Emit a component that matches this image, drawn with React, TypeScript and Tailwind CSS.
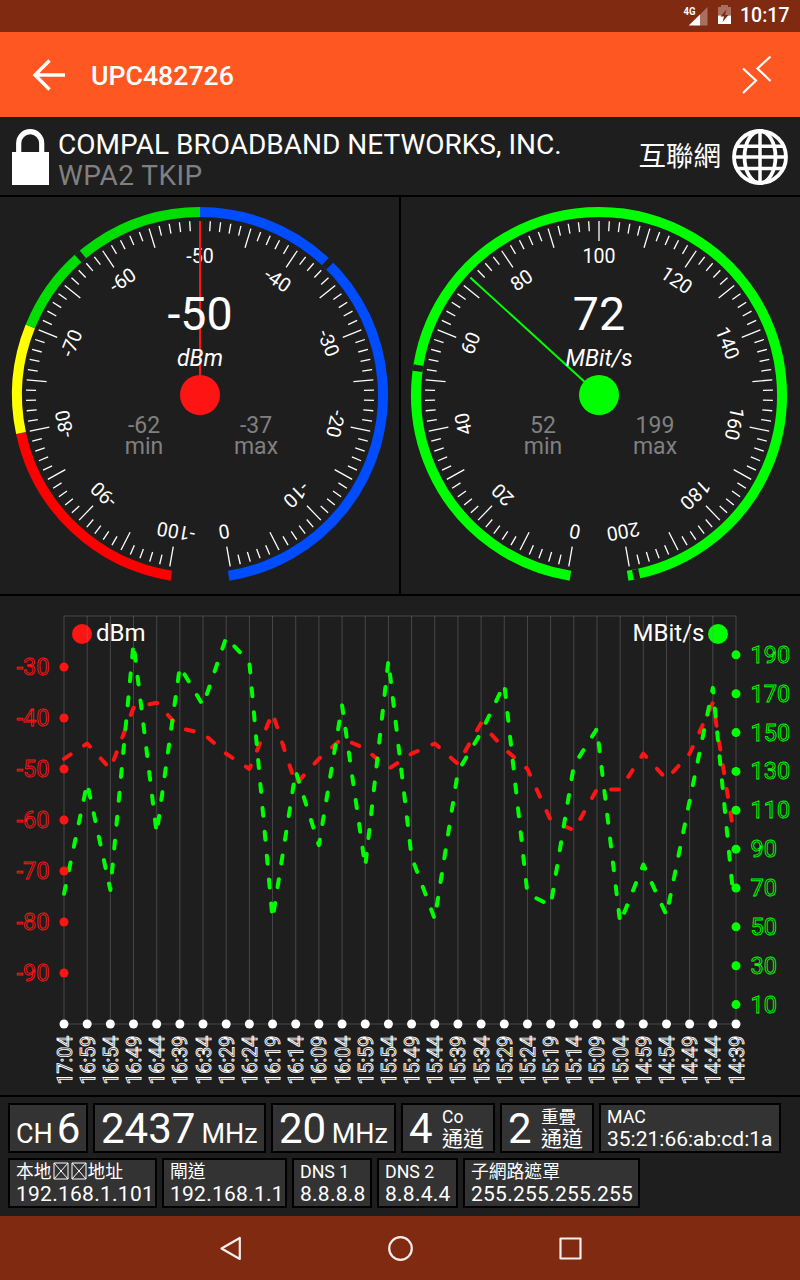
import type { ReactNode } from 'react'

const FONT = "font-['Roboto','Noto_Sans_CJK_TC',sans-serif]"

const TIMES = [
  '17:04', '16:59', '16:54', '16:49', '16:44', '16:39', '16:34', '16:29', '16:24', '16:19',
  '16:14', '16:09', '16:04', '15:59', '15:54', '15:49', '15:44', '15:39', '15:34', '15:29',
  '15:24', '15:19', '15:14', '15:09', '15:04', '14:59', '14:54', '14:49', '14:44', '14:39'
]

const SIGNAL = [
  -48, -45, -50, -38, -37, -42, -43, -47, -50, -39, -53, -48, -44, -46, -50,
  -47, -45, -49, -41, -46, -50, -60, -62, -54, -54, -47, -52, -47, -37, -62
]

const SPEED = [
  67, 124, 69, 196, 98, 184, 164, 199, 186, 54, 130, 92, 164, 81, 187,
  86, 54, 130, 150, 175, 67, 61, 133, 152, 52, 82, 56, 115, 173, 66
]

interface Zone {
  from: number
  to: number
  color: string
}

interface GaugeProps {
  cx: number
  min: number
  max: number
  value: number
  low: number
  high: number
  unit: string
  color: string
  zones: Zone[]
}

// Degrees clockwise from the top
function polar(cx: number, cy: number, r: number, deg: number) {
  const a = (deg * Math.PI) / 180
  return { x: cx + r * Math.sin(a), y: cy - r * Math.cos(a) }
}

function arcPath(cx: number, cy: number, r: number, from: number, to: number) {
  const p = polar(cx, cy, r, from)
  const q = polar(cx, cy, r, to)
  const large = to - from > 180 ? 1 : 0
  return `M${p.x} ${p.y}A${r} ${r} 0 ${large} 1 ${q.x} ${q.y}`
}

function Gauge({ cx, min, max, value, low, high, unit, color, zones }: GaugeProps) {
  const cy = 198
  const angle = (v: number) => ((v - min) / (max - min)) * 340 - 170
  const tip = polar(cx, cy, 174, angle(value))

  return (
    <svg width="399" height="397" viewBox="0 0 399 397" className="block">
      {zones.map((z) => (
        <path
          key={z.from}
          d={arcPath(cx, cy, 183, z.from === min ? -171 : angle(z.from), z.to === max ? 171 : angle(z.to))}
          fill="none"
          stroke={z.color}
          strokeWidth="10"
        />
      ))}
      {[low, high].map((v) => (
        <path key={v} d={arcPath(cx, cy, 183, angle(v) - 1, angle(v) + 1)} fill="none" stroke="#1e1e1e" strokeWidth="10" />
      ))}
      {Array.from({ length: 101 }, (_, i) => (
        <line
          key={i}
          x1={cx}
          x2={cx}
          y1={cy - 174}
          y2={cy - (i % 5 === 0 ? 154 : 164)}
          stroke="#fff"
          strokeWidth="1.3"
          transform={`rotate(${i * 3.4 - 170} ${cx} ${cy})`}
        />
      ))}
      {Array.from({ length: 11 }, (_, i) => (
        <text
          key={i}
          x={cx}
          y={cy - 131.8}
          textAnchor="middle"
          fontSize="19.6"
          fill="#fff"
          transform={`rotate(${i * 34 - 170} ${cx} ${cy})`}
        >
          {min + ((max - min) / 10) * i}
        </text>
      ))}
      <line x1={cx} y1={cy} x2={tip.x} y2={tip.y} stroke={color} strokeWidth="2" />
      <circle cx={cx} cy={cy} r="20" fill={color} />
      <text x={cx} y={cy - 65.5} textAnchor="middle" fontSize="46.5" fill="#fff">{value}</text>
      <text x={cx} y={cy - 29} textAnchor="middle" fontSize="23" fontStyle="italic" fill="#fff">{unit}</text>
      <g fontSize="23" fill="#808080" textAnchor="middle">
        <text x={cx - 56} y={cy + 38}>{low}</text>
        <text x={cx - 56} y={cy + 59}>min</text>
        <text x={cx + 56} y={cy + 38}>{high}</text>
        <text x={cx + 56} y={cy + 59}>max</text>
      </g>
    </svg>
  )
}

function HistoryChart() {
  const left = 64
  const top = 20
  const bottom = 428
  const step = 672 / 29
  const lastX = 733.3
  const signalY = (v: number) => top + (-20 - v) * 5.1
  const speedY = (v: number) => top + ((210 - v) * 408) / 210
  const toPoints = (data: number[], y: (v: number) => number) =>
    data.map((v, i) => `${i === 29 ? lastX : left + i * step},${y(v)}`).join(' ')

  return (
    <svg width="800" height="499" viewBox="0 0 800 499" className="block">
      <circle cx="82" cy="38" r="10" fill="#ff1414" />
      <circle cx="718" cy="38" r="10" fill="#00ff00" />
      <g stroke="#808080" strokeOpacity="0.42" strokeWidth="1">
        <line x1="64" x2="736" y1={top} y2={top} />
        <line x1="64" x2="736" y1={bottom} y2={bottom} />
        {TIMES.map((t, i) => (
          <line key={t} x1={left + i * step} x2={left + i * step} y1={top} y2={bottom} />
        ))}
      </g>
      <text x="96" y="45" fontSize="24" fill="#fff">dBm</text>
      <text x="704.5" y="45" fontSize="24" fill="#fff" textAnchor="end">MBit/s</text>

      <g fill="none" strokeWidth="4" strokeLinecap="round" strokeLinejoin="round" strokeDasharray="8 16">
        <polyline points={toPoints(SIGNAL, signalY)} stroke="#ff1414" />
        <polyline points={toPoints(SPEED, speedY)} stroke="#00ff00" />
      </g>

      {[-30, -40, -50, -60, -70, -80, -90].map((v) => (
        <g key={v}>
          <circle cx="64" cy={signalY(v)} r="4.5" fill="#ff1414" />
          <text x="49.5" y={signalY(v) + 8} fontSize="23.5" textAnchor="end" fill="none" stroke="#ff1414" strokeWidth="0.9">{v}</text>
        </g>
      ))}
      {[190, 170, 150, 130, 110, 90, 70, 50, 30, 10].map((v) => (
        <g key={v}>
          <circle cx="736" cy={speedY(v)} r="4.5" fill="#00ff00" />
          <text x="750.5" y={speedY(v) + 8} fontSize="23.5" fill="none" stroke="#00ff00" strokeWidth="0.9">{v}</text>
        </g>
      ))}
      {TIMES.map((t, i) => (
        <g key={t} transform={`translate(${left + i * step} ${bottom})`}>
          <circle r="4.5" fill="#fff" />
          <text x="-11.7" y="7.5" fontSize="19.6" textAnchor="end" fill="none" stroke="#fff" strokeWidth="0.9" transform="rotate(-90)">{t}</text>
        </g>
      ))}
    </svg>
  )
}

function StatusBar() {
  return (
    <div className="flex h-8 items-center justify-end bg-[#7f2a11] pr-[11px] text-white">
      <svg width="56" height="32" viewBox="682 0 56 32">
        <text x="683.5" y="15" fontSize="10" fontWeight="700" fill="#fff" textLength="12" lengthAdjust="spacingAndGlyphs">4G</text>
        <path d="M707.5 7V25.5H700V14.5Z" fill="#a96f5f" />
        <path d="M700 14.5V25.5H688.7Z" fill="#fff" />
        <path d="M718 7h3V5h7v2h3v8.5h-13z" fill="#a96f5f" />
        <path d="M718 15.5h13V24h-13z" fill="#fff" />
        <path d="M726.5 9.5l-6 7h3.5l-1.500 5.500 6-7H725z" fill="#7f2a11" />
      </svg>
      <span className="ml-[2px] w-[49px] text-[19.5px] leading-none font-medium">10:17</span>
    </div>
  )
}

function AppBar() {
  return (
    <div className="flex h-[85px] items-center bg-[#ff5722] px-7 text-white">
      <svg width="40" height="40" viewBox="28 55 40 40" fill="none" stroke="#fff" strokeWidth="3.4">
        <path d="M65 75H35M49.500 60.500L35 75L49.500 89.500" />
      </svg>
      <h1 className="mt-[3px] ml-[23px] text-[26.7px] leading-none font-medium">UPC482726</h1>
      <svg width="32" height="40" viewBox="740 54 32 40" fill="none" stroke="#fff" strokeWidth="2.200" className="ml-auto">
        <path d="M743 67.500L756 79.500L743 92M770.500 55.500L757.500 67.500L770.500 80" />
      </svg>
    </div>
  )
}

function NetworkHeader() {
  return (
    <div className="flex h-[78px] bg-[#1e1e1e] px-3 pt-3 text-white">
      <svg width="37" height="56" viewBox="12 129 37 56">
        <path d="M18.700 154V143.200a11.500 11.500 0 0 1 23 0V154" fill="none" stroke="#fff" strokeWidth="5.200" />
        <path d="M12 152h37v33H12z" fill="#fff" />
      </svg>
      <div className="ml-[9px] text-[28px] leading-[31px] whitespace-nowrap">
        <div>COMPAL BROADBAND NETWORKS, INC.</div>
        <div className="tracking-[0.45px] text-[#808080]">WPA2 TKIP</div>
      </div>
      <div className="mt-[13px] ml-auto text-[27.5px] leading-[30px]">互聯網</div>
      <svg width="56" height="56" viewBox="0 0 56 56" fill="none" stroke="#fff" strokeWidth="3.800" className="ml-[11px]">
        <circle cx="28" cy="28" r="26" />
        <ellipse cx="28" cy="28" rx="15.500" ry="26" />
        <path d="M28 2V54M2 28H54M4 17.200H52M4 39.500H52" strokeWidth="3.500" />
      </svg>
    </div>
  )
}

function Card({ width, children }: { width: string; children: ReactNode }) {
  return (
    <div className={`${width} h-[50px] border-2 border-black bg-[#333] pl-1.5 whitespace-nowrap text-white`}>
      {children}
    </div>
  )
}

function UnitCard({ width, children }: { width: string; children: ReactNode }) {
  return (
    <Card width={width}>
      <div className="flex items-baseline text-[27px] leading-[48px]">{children}</div>
    </Card>
  )
}

function ChannelCard({ count, label }: { count: number; label: string }) {
  return (
    <Card width="w-[94px]">
      <div className="flex">
        <span className="text-[42px] leading-[48px]">{count}</span>
        <div className="ml-[9.5px]">
          <div className="h-[23px] text-[17.5px] leading-[24px]">{label}</div>
          <div className="text-[21px] leading-[22px]">通道</div>
        </div>
      </div>
    </Card>
  )
}

function FieldCard({ width, title, children }: { width: string; title: ReactNode; children: ReactNode }) {
  return (
    <Card width={width}>
      <div className="h-[23px] text-[17.8px] leading-[24px]">{title}</div>
      <div className="text-[21px] leading-[22px]">{children}</div>
    </Card>
  )
}

function Address({ value }: { value: string }) {
  return <span className="tracking-[0.26px]">{value}</span>
}

// Placeholder box for a missing glyph
function MissingGlyph() {
  return (
    <svg width="18" height="18" viewBox="0 0 18 18" className="inline-block align-[-2px]" fill="none" stroke="#fff">
      <path d="M2 1H16V17H2ZM2 1L16 17M16 1L2 17" />
    </svg>
  )
}

function InfoPanel() {
  return (
    <div className="flex h-[119px] flex-col gap-[5px] bg-[#1e1e1e] px-2 pt-1.5">
      <div className="flex gap-[5px]">
        <UnitCard width="w-[80px]">
          CH<span className="ml-1 text-[42px]">6</span>
        </UnitCard>
        <UnitCard width="w-[173px]">
          <span className="mr-1.5 text-[42px]">2437</span>MHz
        </UnitCard>
        <UnitCard width="w-[125px]">
          <span className="mr-[5.5px] text-[42px]">20</span>MHz
        </UnitCard>
        <ChannelCard count={4} label="Co" />
        <ChannelCard count={2} label="重疊" />
        <FieldCard width="w-[182px]" title="MAC">35:21:66:ab:cd:1a</FieldCard>
      </div>
      <div className="flex gap-[5px]">
        <FieldCard width="w-[149px]" title={<>本地<MissingGlyph /><MissingGlyph />地址</>}>
          <Address value="192.168.1.101" />
        </FieldCard>
        <FieldCard width="w-[125px]" title="閘道">
          <Address value="192.168.1.1" />
        </FieldCard>
        <FieldCard width="w-[80px]" title="DNS 1">
          <Address value="8.8.8.8" />
        </FieldCard>
        <FieldCard width="w-[81px]" title="DNS 2">
          <Address value="8.8.4.4" />
        </FieldCard>
        <FieldCard width="w-[177px]" title="子網路遮罩">
          <Address value="255.255.255.255" />
        </FieldCard>
      </div>
    </div>
  )
}

function NavBar() {
  return (
    <div className="flex h-16 items-center justify-center gap-[142px] bg-[#7f2a11]">
      <svg width="28" height="28" viewBox="0 0 28 28" fill="none" stroke="#f5eeec" strokeWidth="2.200" strokeLinejoin="round">
        <path d="M5.500 14.500L23.800 4V25Z" />
      </svg>
      <svg width="28" height="28" viewBox="0 0 28 28" fill="none" stroke="#f5eeec" strokeWidth="2.200">
        <circle cx="14.500" cy="14.500" r="11.300" />
      </svg>
      <svg width="28" height="28" viewBox="0 0 28 28" fill="none" stroke="#f5eeec" strokeWidth="2.200" strokeLinejoin="round">
        <path d="M4.500 4.500H24.500V24.500H4.500Z" />
      </svg>
    </div>
  )
}

export default function App() {
  return (
    <div className={`flex h-[1280px] w-[800px] flex-col overflow-hidden bg-black ${FONT}`}>
      <StatusBar />
      <AppBar />
      <NetworkHeader />
      <div className="mt-0.5 flex h-[397px] gap-0.5">
        <div className="w-[399px] bg-[#1e1e1e]">
          <Gauge
            cx={200}
            min={-100}
            max={0}
            value={-50}
            low={-62}
            high={-37}
            unit="dBm"
            color="#ff1414"
            zones={[
              { from: -100, to: -80, color: '#ff0000' },
              { from: -80, to: -70, color: '#ffff00' },
              { from: -70, to: -50, color: '#00dd00' },
              { from: -50, to: 0, color: '#004cff' }
            ]}
          />
        </div>
        <div className="w-[399px] bg-[#1e1e1e]">
          <Gauge
            cx={198}
            min={0}
            max={200}
            value={72}
            low={52}
            high={199}
            unit="MBit/s"
            color="#00ff00"
            zones={[{ from: 0, to: 200, color: '#00ff00' }]}
          />
        </div>
      </div>
      <div className="mt-0.5 h-[499px] bg-[#1e1e1e]">
        <HistoryChart />
      </div>
      <div className="mt-0.5">
        <InfoPanel />
      </div>
      <NavBar />
    </div>
  )
}
